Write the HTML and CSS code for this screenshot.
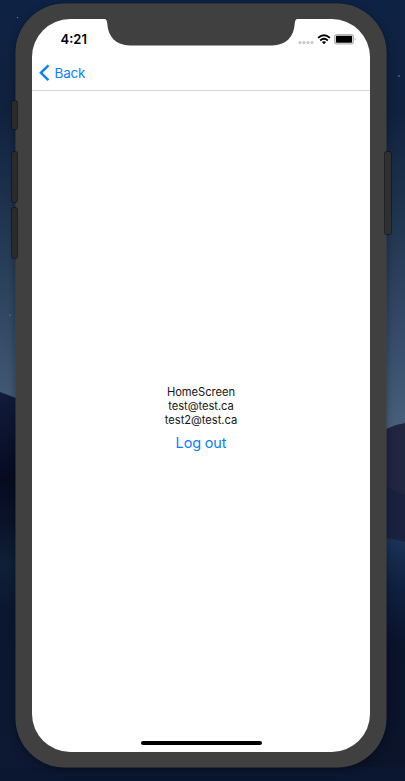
FILE: index.html
```html
<!DOCTYPE html>
<html lang="en">
<head>
<meta charset="utf-8">
<title>HomeScreen</title>
<link rel="stylesheet" href="styles.css">
</head>
<body>
<svg class="wallpaper" viewBox="0 0 405 781" aria-hidden="true">
  <defs>
    <linearGradient id="sky" x1="0" y1="0" x2="0" y2="440" gradientUnits="userSpaceOnUse">
      <stop offset="0" stop-color="#0e2244"/>
      <stop offset=".25" stop-color="#10213f"/>
      <stop offset=".5" stop-color="#20354f"/>
      <stop offset=".75" stop-color="#344a68"/>
      <stop offset="1" stop-color="#4b637f"/>
    </linearGradient>
    <linearGradient id="leftDune" x1="0" y1="393" x2="0" y2="781" gradientUnits="userSpaceOnUse">
      <stop offset="0" stop-color="#111c3c"/>
      <stop offset=".22" stop-color="#060b20"/>
      <stop offset=".34" stop-color="#0a1429"/>
      <stop offset=".44" stop-color="#0f2038"/>
      <stop offset=".56" stop-color="#0b1730"/>
      <stop offset="1" stop-color="#0d1932"/>
    </linearGradient>
    <linearGradient id="rightDune" x1="0" y1="535" x2="0" y2="781" gradientUnits="userSpaceOnUse">
      <stop offset="0" stop-color="#1c3558"/>
      <stop offset=".2" stop-color="#0f2140"/>
      <stop offset=".45" stop-color="#09132a"/>
      <stop offset="1" stop-color="#0b1429"/>
    </linearGradient>
  </defs>
  <rect width="405" height="781" fill="url(#sky)"/>
  <path d="M0 392 16 398Q120 440 200 781H0Z" fill="url(#leftDune)"/>
  <path d="M200 480 386 429 396 425 405 423V781H200Z" fill="#202640"/>
  <path d="M200 480 386 487 405 495V781H200Z" fill="#19213f"/>
  <path d="M200 600 Q340 520 405 542V781H200Z" fill="url(#rightDune)"/>
  <path d="M0 767H405V781H0Z" fill="#0b1630"/>
  <g fill="#8ca0bd">
    <circle cx="17.5" cy="17.5" r=".6"/><circle cx="399" cy="76" r=".7"/>
    <circle cx="10" cy="315" r=".6"/>
  </g>
</svg>
<main class="phone">
  <i class="key key-mute"></i>
  <i class="key key-up"></i>
  <i class="key key-down"></i>
  <i class="key key-power"></i>
  <div class="screen">
    <svg class="notch" viewBox="0 0 198 28" aria-hidden="true">
      <path d="M0 0V.6H2Q5 1 5.2 5C6 19 14 27.4 28 27.4H170C184 27.4 192 19 192.8 5Q193 1 196 .6H198V0Z" fill="#404040"/>
    </svg>
    <header class="status">
      <span class="time">4:21</span>
      <svg class="indicators" viewBox="0 0 60 14" aria-hidden="true">
        <g fill="#c7c7c7"><circle cx="2" cy="9.6" r="1.55"/><circle cx="6" cy="9.6" r="1.55"/><circle cx="10" cy="9.6" r="1.55"/><circle cx="14" cy="9.6" r="1.55"/></g>
        <g fill="none" stroke="#000" stroke-width="1.9">
          <path d="M20.1 4.9Q26 -.5 31.9 4.9"/>
          <path d="M22.2 7.5Q26 4.2 29.8 7.5"/>
        </g>
        <path d="M23.9 9.1Q26 7.4 28.1 9.1L26 11.2Z"/>
        <rect x="36.6" y="1.6" width="18.8" height="9.2" rx="2.2" fill="#fff" stroke="#b4b4b4" stroke-width="1.3"/>
        <rect x="37.9" y="2.7" width="16.2" height="7" rx="1"/>
        <path d="M56.8 4.8Q58.3 6.2 56.8 7.6Z" fill="#8f8f8f"/>
      </svg>
    </header>
    <nav class="navbar">
      <svg class="chevron" viewBox="0 0 11 18" aria-hidden="true"><path d="M9.4 1.4 1.9 8.8 9.4 16.2" fill="none" stroke="#087fff" stroke-width="2.4"/></svg>
      <span>Back</span>
    </nav>
    <section class="content">
      <div>HomeScreen</div>
      <div>test@test.ca</div>
      <div class="second">test2@test.ca</div>
      <div class="logout">Log out</div>
    </section>
    <div class="home-bar"></div>
  </div>
</main>
</body>
</html>
```
FILE: styles.css
```css
* { box-sizing: border-box; }
body {
  margin: 0;
  width: 405px;
  height: 781px;
  overflow: hidden;
  padding: 4px 0 0 16px;
  background: #0d1932;
  font-family: Inter, "Liberation Sans", sans-serif;
}
.wallpaper { position: absolute; inset: 0; width: 405px; height: 781px; }
.phone {
  position: relative;
  width: 370px;
  height: 763px;
  padding: 15px 16px;
  border-radius: 49px;
  background: #404040;
  box-shadow: 0 0 0 .5px #44474b, 0 2px 8px rgba(0, 0, 0, .4);
}
.key {
  position: absolute;
  width: 5px;
  left: -4px;
  border-radius: 1.5px;
  background: #2b2b2b;
  box-shadow: 0 0 0 .7px #11151b;
}
.key-mute { top: 97px; height: 28px; }
.key-up { top: 148px; height: 50px; }
.key-down { top: 204px; height: 50px; }
.key-power { top: 148px; height: 82px; left: 369px; width: 6px; background: #303030; }
.screen {
  position: relative;
  display: flex;
  flex-direction: column;
  height: 733px;
  border-radius: 38px;
  background: #fff;
  overflow: hidden;
}
.notch { position: absolute; left: 70px; top: -.6px; width: 198px; height: 28px; }
.status {
  display: flex;
  justify-content: space-between;
  height: 36px;
  padding: 12px 12px 0 28.5px;
}
.time { font-size: 13px; line-height: 16px; font-weight: 600; color: #000; }
.indicators { width: 60px; height: 14px; margin-top: 2px; }
.navbar {
  display: flex;
  align-items: center;
  gap: 5px;
  height: 36px;
  padding-left: 6.5px;
  border-bottom: 1px solid #d5d5d5;
  font-size: 13.5px;
  letter-spacing: -.2px;
  color: #0a80ff;
}
.chevron { width: 11px; height: 18px; }
.content {
  flex: 1;
  display: flex;
  flex-direction: column;
  align-items: center;
  justify-content: center;
  padding-top: 4px;
  font-size: 11.2px;
  line-height: 14px;
  letter-spacing: -.05px;
  color: #151515;
}
.logout { margin-top: 7px; font-size: 14.4px; line-height: 18px; letter-spacing: -.1px; color: #0a80ff; }
.home-bar {
  align-self: center;
  width: 121px;
  height: 4px;
  margin-bottom: 7px;
  border-radius: 2px;
  background: #000;
}
```
